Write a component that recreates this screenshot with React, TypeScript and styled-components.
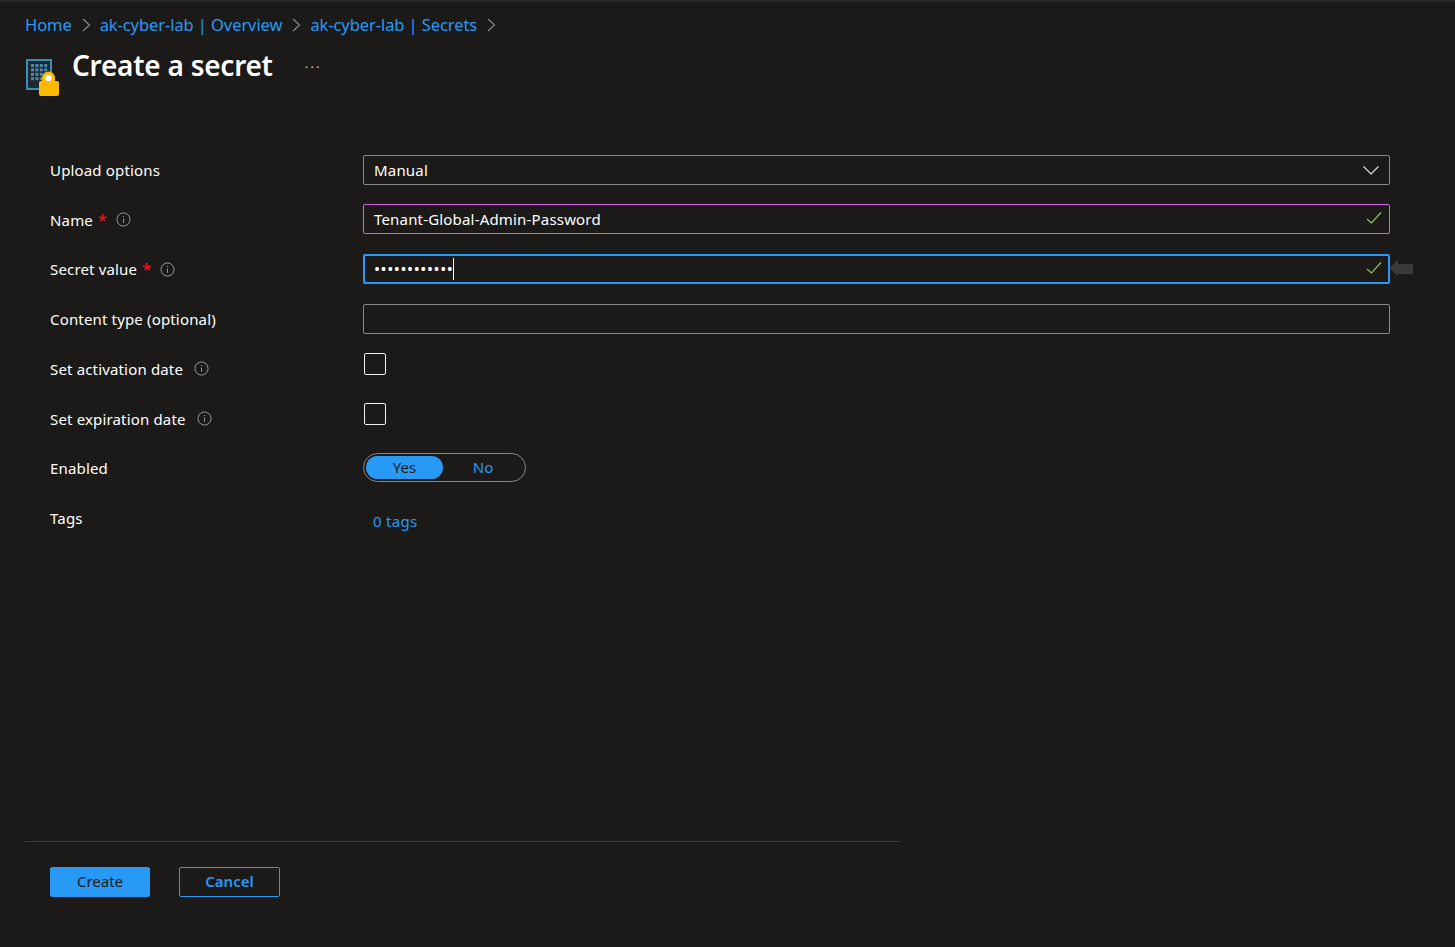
import styled, { createGlobalStyle } from 'styled-components'

const GlobalStyle = createGlobalStyle`
  html, body {
    margin: 0;
    padding: 0;
    background: #1b1a19;
    overflow: hidden;
  }
  * {
    box-sizing: border-box;
  }
`

const Page = styled.div`
  display: flex;
  flex-direction: column;
  height: 947px;
  border-top: 2px solid #292827;
  background: #1b1a19;
  color: #fff;
  font-family: 'Noto Sans', 'Open Sans', sans-serif;
  font-size: 15px;
`

const Breadcrumbs = styled.nav`
  display: flex;
  align-items: center;
  height: 44px;
  padding: 0 0 0 25px;
`

const Crumb = styled.a`
  color: #2899f5;
  font-size: 16.5px;
  letter-spacing: -0.08px;
  white-space: nowrap;
`

const CrumbArrow = styled.svg`
  width: 9px;
  height: 14px;
  margin: 1px 9px 0 10px;
  fill: none;
  stroke: #8a8886;
  stroke-width: 1.2;
`

const Header = styled.header`
  display: flex;
  align-items: flex-start;
  height: 108.6px;
  padding-left: 26px;
`

const ResourceIcon = styled.svg`
  width: 34px;
  height: 38px;
  margin-top: 13px;
  flex-shrink: 0;
`

const Title = styled.h1`
  margin: 1px 0 0 12px;
  font-size: 28px;
  line-height: 36px;
  font-weight: 600;
  letter-spacing: -0.25px;
  white-space: nowrap;
`

const More = styled.span`
  margin: 11px 0 0 32px;
  font-size: 13px;
  line-height: 20px;
  letter-spacing: 2.2px;
  color: #c8c6c4;
`

const Form = styled.form`
  display: flex;
  flex-direction: column;
  padding: 0 65px 0 50px;
`

const Row = styled.div`
  display: grid;
  grid-template-columns: 313px 1fr;
  height: 49.7px;
  align-items: start;
`

const Label = styled.label`
  display: flex;
  align-items: center;
  height: 31px;
  font-size: 15px;
  letter-spacing: 0.16px;
  white-space: nowrap;
`

const Required = styled.span`
  color: #e81123;
  margin: 0 -2px 0 5px;
  font-size: 16px;
  font-weight: 600;
  line-height: 16px;
  letter-spacing: 0;
`

const InfoIcon = styled.svg`
  width: 15px;
  height: 15px;
  margin-left: 11px;
  fill: none;
  stroke: #a19f9d;
`

const InputBox = styled.div<{ $state?: 'valid' | 'focused' }>`
  position: relative;
  display: flex;
  align-items: center;
  height: 30px;
  padding: 0 10px;
  border-radius: 2px;
  border: ${(p) =>
    p.$state === 'focused' ? '2px solid #2899f5' : p.$state === 'valid' ? '1px solid #d660e8' : '1px solid #8a8886'};
  font-size: 15px;
  letter-spacing: 0.18px;
  white-space: nowrap;
`

const DropdownIcon = styled.svg`
  position: absolute;
  right: 10px;
  top: 50%;
  transform: translateY(-50%);
  width: 16px;
  height: 16px;
  fill: none;
  stroke: #e1dfdd;
  stroke-width: 1.2;
`

const CheckIcon = styled.svg<{ $thick?: boolean }>`
  position: absolute;
  right: ${(p) => (p.$thick ? '6px' : '7px')};
  top: 50%;
  margin-top: -1px;
  transform: translateY(-50%);
  width: 16px;
  height: 16px;
  fill: none;
  stroke: #92c353;
  stroke-width: 1.2;
`

const Dots = styled.span`
  font-size: 16px;
  letter-spacing: 0.6px;
  margin-left: -1px;
`

const Caret = styled.span`
  display: inline-block;
  width: 1px;
  height: 22px;
  background: #fff;
`

const Pointer = styled.svg`
  position: absolute;
  left: 100%;
  top: 4px;
  margin-left: 1px;
  width: 24px;
  height: 16px;
  fill: #3b3a39;
`

const Checkbox = styled.span`
  display: block;
  width: 22px;
  height: 22px;
  margin-left: 1px;
  border: 1px solid #f3f2f1;
  border-radius: 2px;
`

const Toggle = styled.div`
  display: flex;
  align-items: center;
  width: 163px;
  height: 29px;
  padding: 0 2px;
  border: 1px solid #8a8886;
  border-radius: 15px;
`

const ToggleOption = styled.span<{ $on?: boolean }>`
  display: flex;
  align-items: center;
  justify-content: center;
  width: ${(p) => (p.$on ? '78px' : '81px')};
  height: 23px;
  border-radius: 12px;
  font-size: 15px;
  background: ${(p) => (p.$on ? '#2899f5' : 'transparent')};
  color: ${(p) => (p.$on ? '#1b1a19' : '#2899f5')};
`

const TagsLink = styled.a`
  display: block;
  margin: 7px 0 0 10px;
  line-height: 24px;
  color: #2899f5;
  font-size: 15px;
  letter-spacing: 0.3px;
`

const Footer = styled.footer`
  margin-top: auto;
  margin-left: 25px;
  width: 875px;
  height: 106px;
  padding: 25px 0 0 25px;
  border-top: 1px solid #3b3a39;
  display: flex;
  align-items: flex-start;
  gap: 29px;
`

const Button = styled.button<{ $primary?: boolean }>`
  width: ${(p) => (p.$primary ? '100px' : '101px')};
  height: 30px;
  padding: 0 0 2px;
  border-radius: 2px;
  border: 1px solid #2899f5;
  background: ${(p) => (p.$primary ? '#2899f5' : 'transparent')};
  color: ${(p) => (p.$primary ? '#1b1a19' : '#2899f5')};
  font-family: inherit;
  font-size: 15px;
  font-weight: ${(p) => (p.$primary ? 400 : 600)};
`

const Chevron = () => (
  <CrumbArrow viewBox="0 0 9 14">
    <path d="M1 1l6.5 6L1 13" />
  </CrumbArrow>
)

const Info = () => (
  <InfoIcon viewBox="0 0 16 16">
    <circle cx="8" cy="8" r="7" />
    <path d="M8 7v4.5M8 4.2v1.2" />
  </InfoIcon>
)

const Check = ({ thick }: { thick?: boolean }) => (
  <CheckIcon viewBox="0 0 16 16" $thick={thick}>
    <path d="M1 9l4.5 4L15 2.5" />
  </CheckIcon>
)

const grid = [0, 1, 2, 3].flatMap((row) => [0, 1, 2, 3].map((col) => ({ row, col })))

export default function App() {
  return (
    <Page>
      <GlobalStyle />
      <Breadcrumbs>
        <Crumb>Home</Crumb>
        <Chevron />
        <Crumb>ak-cyber-lab | Overview</Crumb>
        <Chevron />
        <Crumb>ak-cyber-lab | Secrets</Crumb>
        <Chevron />
      </Breadcrumbs>
      <Header>
        <ResourceIcon viewBox="0 0 34 38">
          <rect x="1" y="1" width="24" height="29" fill="#1d2a33" stroke="#3a8fb7" strokeWidth="2" />
          {grid.map(({ row, col }) => (
            <rect key={`${row}-${col}`} x={5 + col * 4.4} y={5 + row * 4.4} width="3" height="3" fill="#4f8aa8" />
          ))}
          <path d="M16 24v-5a6.5 6.5 0 0 1 13 0v5" fill="#ffb900" />
          <circle cx="22.5" cy="19" r="3.2" fill="#fff" />
          <rect x="13" y="22" width="20" height="15" rx="2" fill="#ffb900" />
        </ResourceIcon>
        <Title>Create a secret</Title>
        <More>···</More>
      </Header>
      <Form>
        <Row>
          <Label>Upload options</Label>
          <InputBox>
            Manual
            <DropdownIcon viewBox="0 0 16 16">
              <path d="M0.5 4.5L8 12l7.5-7.5" />
            </DropdownIcon>
          </InputBox>
        </Row>
        <Row>
          <Label>
            Name<Required>*</Required>
            <Info />
          </Label>
          <InputBox $state="valid">
            Tenant-Global-Admin-Password
            <Check />
          </InputBox>
        </Row>
        <Row>
          <Label>
            Secret value<Required>*</Required>
            <Info />
          </Label>
          <InputBox $state="focused">
            <Dots>••••••••••••</Dots>
            <Caret />
            <Check thick />
            <Pointer viewBox="0 0 24 16">
              <path d="M0 8L9 0V4H24V14H9V16z" />
            </Pointer>
          </InputBox>
        </Row>
        <Row>
          <Label>Content type (optional)</Label>
          <InputBox />
        </Row>
        <Row>
          <Label>
            Set activation date
            <Info />
          </Label>
          <Checkbox />
        </Row>
        <Row>
          <Label>
            Set expiration date
            <Info />
          </Label>
          <Checkbox />
        </Row>
        <Row>
          <Label>Enabled</Label>
          <Toggle>
            <ToggleOption $on>Yes</ToggleOption>
            <ToggleOption>No</ToggleOption>
          </Toggle>
        </Row>
        <Row>
          <Label>Tags</Label>
          <TagsLink>0 tags</TagsLink>
        </Row>
      </Form>
      <Footer>
        <Button $primary>Create</Button>
        <Button>Cancel</Button>
      </Footer>
    </Page>
  )
}
